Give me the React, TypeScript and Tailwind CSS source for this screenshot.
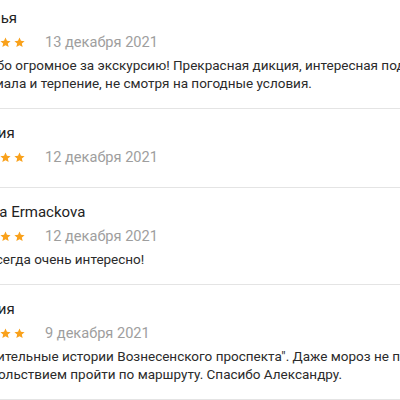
const reviews = [
  {
    name: 'Наталья',
    date: '13 декабря 2021',
    lines: [
      'Спасибо огромное за экскурсию! Прекрасная дикция, интересная подача',
      'материала и терпение, не смотря на погодные условия.',
    ],
  },
  { name: 'Евгения', date: '12 декабря 2021', lines: [] },
  {
    name: 'Tatiana Ermackova',
    date: '12 декабря 2021',
    lines: ['Мне всегда очень интересно!'],
  },
  {
    name: 'Евгения',
    date: '9 декабря 2021',
    lines: [
      'Поразительные истории Вознесенского проспекта". Даже мороз не помешал',
      'с удовольствием пройти по маршруту. Спасибо Александру.',
    ],
  },
];

function Star() {
  return (
    <svg width="11" height="11" viewBox="0 0 24 24" className="shrink-0">
      <path
        d="M12 1l3.2 7.3 7.9.7-6 5.2 1.8 7.8L12 18l-6.9 4 1.8-7.8-6-5.2 7.9-.7z"
        fill="#f9a11b"
      />
    </svg>
  );
}

export default function App() {
  return (
    <div
      className="w-[400px] h-[400px] overflow-hidden bg-white"
      style={{ fontFamily: 'Roboto, "Noto Sans", sans-serif' }}
    >
      <div className="-mt-[6px]">
        {reviews.map((r, i) => (
          <div
            key={i}
            className={`border-b border-[#e4e4e4] pt-[14px] ${r.lines.length ? 'pb-[16px]' : 'pb-5'}`}
          >
            <div className="-ml-[42px] whitespace-nowrap">
              <div className="text-[15px] leading-5 text-[#222]">{r.name}</div>
              <div className="mt-[4px] flex h-5 items-center">
                <div className="flex gap-[3px]">
                  <Star />
                  <Star />
                  <Star />
                  <Star />
                  <Star />
                </div>
                <span className="ml-5 text-[14.6px] leading-5 text-[#9e9e9e]">{r.date}</span>
              </div>
              {r.lines.length > 0 && (
                <div className="mt-[4px] text-[13.5px] leading-[18px] text-[#2b2b2b]">
                  {r.lines.map((l, j) => (
                    <div key={j}>{l}</div>
                  ))}
                </div>
              )}
            </div>
          </div>
        ))}
      </div>
    </div>
  );
}
